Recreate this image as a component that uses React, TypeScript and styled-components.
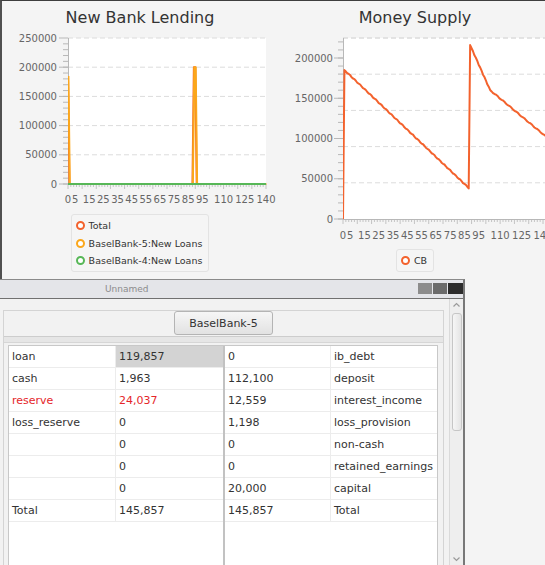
import React from "react";
import styled, { createGlobalStyle } from "styled-components";

const GlobalStyle = createGlobalStyle`
  html, body { margin: 0; padding: 0; background: #f4f4f4; }
  body { font-family: "DejaVu Sans", "Liberation Sans", sans-serif; }
`;

const FONT = "DejaVu Sans, Liberation Sans, sans-serif";

const Screen = styled.div`
  width: 545px;
  height: 565px;
  overflow: hidden;
  background: #f4f4f4;
  display: flex;
  flex-direction: column;
`;

const ChartsWindow = styled.div`
  height: 279px;
  flex: none;
  box-sizing: border-box;
  border-top: 1px solid #3e3e3e;
  border-left: 2px solid #505050;
  display: flex;
`;

const ChartPanel = styled.div<{ $width?: number; $padLeft?: number }>`
  width: ${(p) => (p.$width ? `${p.$width}px` : "auto")};
  flex: ${(p) => (p.$width ? "none" : "1")};
  padding-left: ${(p) => p.$padLeft ?? 0}px;
  min-width: 0;
  display: flex;
  flex-direction: column;
  align-items: center;
`;

const ChartTitle = styled.div`
  padding-top: 5px;
  height: 24px;
  line-height: 24px;
  font-size: 16px;
  color: #333;
  white-space: nowrap;
`;

const ChartSvg = styled.svg`
  display: block;
  flex: none;
  overflow: hidden;
`;

const Legend = styled.div`
  margin-top: 3px;
  box-sizing: border-box;
  border: 1px solid #e3e3e3;
  border-radius: 3px;
  background: #f5f5f5;
  padding: 1.75px 6px 1.75px 4px;
  display: flex;
  flex-direction: column;
`;

const LegendItem = styled.div`
  height: 17.5px;
  display: flex;
  align-items: center;
  gap: 4px;
  font-size: 9.5px;
  color: #333;
  white-space: nowrap;
`;

const LegendSymbol = styled.span<{ $color: string }>`
  width: 9px;
  height: 9px;
  box-sizing: border-box;
  border-radius: 50%;
  border: 2px solid ${(p) => p.$color};
  background: #fff;
  flex: none;
`;

const Frame = styled.div`
  width: 465px;
  flex: 1;
  min-height: 0;
  box-sizing: border-box;
  border-top: 1px solid #8a8a8a;
  border-right: 2px solid #787878;
  display: flex;
  flex-direction: column;
  background: #f2f2f2;
`;

const TitleBar = styled.div`
  height: 19px;
  flex: none;
  box-sizing: border-box;
  border-bottom: 1px solid #707070;
  background: #e4e5e9;
  display: flex;
  align-items: flex-start;
  padding-left: 105px;
`;

const FrameTitle = styled.span`
  flex: 1;
  font-size: 9px;
  line-height: 18px;
  color: #8c8c8c;
`;

const WindowButtons = styled.div`
  display: flex;
  gap: 1px;
  margin-top: 3px;
`;

const WinButton = styled.div<{ $shade: string; $w: number }>`
  width: ${(p) => p.$w}px;
  height: 11px;
  background: ${(p) => p.$shade};
`;

const FrameBody = styled.div`
  flex: 1;
  min-height: 0;
  display: flex;
`;

const BankPanel = styled.div`
  margin: 11px 0 0 3px;
  width: 441px;
  box-sizing: border-box;
  border: 1px solid #d4d4d4;
  border-bottom: none;
  display: flex;
  flex-direction: column;
`;

const BankHeader = styled.div`
  height: 25px;
  flex: none;
  display: flex;
  justify-content: center;
  align-items: flex-start;
`;

const BankButton = styled.button`
  width: 99px;
  height: 24px;
  box-sizing: border-box;
  margin: 0;
  padding: 0;
  border: 1px solid #b4b4b4;
  border-radius: 3px;
  background: linear-gradient(#f6f6f6, #e2e2e2);
  font-family: ${FONT};
  font-size: 11px;
  color: #333;
`;

const Divider = styled.div`
  height: 5px;
  flex: none;
  border-top: 1px solid #cdcdcd;
  border-bottom: 1px solid #d6d6d6;
  background: #e6e6e6;
`;

const SheetBox = styled.div`
  margin: 2px 5px 0 4px;
  flex: 1;
  display: flex;
  background: #fff;
  border: 1px solid #c8c8c8;
  border-bottom: none;
`;

const SheetHalf = styled.div<{ $cols: string }>`
  display: grid;
  grid-template-columns: ${(p) => p.$cols};
  grid-auto-rows: 22px;
  align-content: start;
`;

const SheetSeparator = styled.div`
  width: 2px;
  flex: none;
  background: #c2c2c2;
`;

const Cell = styled.div<{ $red?: boolean; $selected?: boolean; $last?: boolean }>`
  box-sizing: border-box;
  border-bottom: 1px solid #ececec;
  border-right: ${(p) => (p.$last ? "none" : "1px solid #ececec")};
  padding-left: 3px;
  font-size: 11px;
  line-height: 21px;
  white-space: nowrap;
  overflow: hidden;
  color: ${(p) => (p.$red ? "#e5262a" : "#333")};
  background: ${(p) => (p.$selected ? "#d3d3d3" : "transparent")};
`;

const ScrollBar = styled.div`
  margin-left: 5px;
  width: 14px;
  flex: none;
  box-sizing: border-box;
  border-left: 1px solid #dadada;
  background: #eeeeee;
  display: flex;
  flex-direction: column;
  align-items: center;
`;

const ScrollArrow = styled.svg`
  display: block;
  flex: none;
`;

const ScrollThumb = styled.div`
  margin-top: 2px;
  width: 10px;
  height: 118px;
  box-sizing: border-box;
  border: 1px solid #c6c6c6;
  border-radius: 3px;
  background: linear-gradient(to right, #f6f6f6, #e4e4e4);
`;

const ScrollSpacer = styled.div`
  flex: 1;
`;

/* ---------------- charts ---------------- */

const AXIS = "#b8b8b8";
const GRID = "#dcdcdc";
const LABEL = "#666";

const C1 = "#f3622d";
const C2 = "#fba71b";
const C3 = "#57b757";

const xLabels = [0, 5, 15, 25, 35, 45, 55, 65, 75, 85, 95, 110, 125, 140];

function poly(pts: [number, number][]) {
  return pts.map((p) => `${p[0].toFixed(2)},${p[1].toFixed(2)}`).join(" ");
}

const OFF = 5;

function LendingChart() {
  const W = 276, H = 181;
  const x0 = 66, x1 = 264, y0 = 3 + OFF, y1 = 149 + OFF;
  const sx = (t: number) => x0 + (t * (x1 - x0)) / 140;
  const sy = (v: number) => y1 - (v * (y1 - y0)) / 250000;
  const majors = [0, 1, 2, 3, 4, 5].map((k) => sy(k * 50000));
  const minors: number[] = [];
  for (let k = 0; k < 25; k++) minors.push(sy(k * 10000));
  const xMinor: number[] = [];
  for (let t = 0; t <= 140; t += 2) xMinor.push(t);

  const spikes: [number, number][] = [
    [0, 185000], [1, 0], [88, 0], [89, 200000], [90, 200000], [91, 0], [140, 0],
  ];
  const flat: [number, number][] = [[0, 0], [140, 0]];

  return (
    <ChartSvg width={W} height={H} viewBox={`0 0 ${W} ${H}`}>
      <defs>
        <clipPath id="lendClip">
          <rect x={x0} y={y0 - 1} width={x1 - x0 + 1} height={y1 - y0 + 2} />
        </clipPath>
      </defs>
      <rect x={x0} y={y0} width={x1 - x0} height={y1 - y0} fill="#fff" />
      {majors.slice(1).map((y, i) => (
        <line key={i} x1={x0} x2={x1} y1={y} y2={y} stroke={GRID} strokeDasharray="5 3" />
      ))}
      <line x1={x0 + 0.5} x2={x0 + 0.5} y1={y0} y2={y1} stroke={AXIS} />
      {minors.map((y, i) => (
        <line key={i} x1={x0 - 5} x2={x0} y1={y} y2={y} stroke={AXIS} />
      ))}
      {majors.map((y, i) => (
        <line key={i} x1={x0 - 9} x2={x0} y1={y} y2={y} stroke={AXIS} />
      ))}
      {majors.map((y, i) => (
        <text key={i} x={55} y={y + 3.6} textAnchor="end" fontSize={10} fill={LABEL} fontFamily={FONT}>
          {i * 50000}
        </text>
      ))}
      <line x1={x0} x2={x1} y1={y1 + 0.5} y2={y1 + 0.5} stroke={AXIS} />
      {xMinor.map((t) => (
        <line key={t} x1={sx(t)} x2={sx(t)} y1={y1} y2={y1 + (t % 10 === 0 ? 5 : 3)} stroke={AXIS} strokeWidth={0.8} />
      ))}
      {xLabels.map((t) => (
        <text key={t} x={sx(t)} y={167.6 + OFF} textAnchor="middle" fontSize={10} fill={LABEL} fontFamily={FONT}>
          {t}
        </text>
      ))}
      <g clipPath="url(#lendClip)" fill="none" strokeWidth={2} strokeLinejoin="round">
        <polyline points={poly(spikes.map(([t, v]) => [sx(t), sy(v)]))} stroke={C1} />
        <polyline points={poly(spikes.map(([t, v]) => [sx(t) + 0.4, sy(v)]))} stroke={C2} />
        <polyline points={poly(flat.map(([t, v]) => [sx(t), sy(v)]))} stroke={C3} />
      </g>
    </ChartSvg>
  );
}

function MoneyChart() {
  const W = 260, H = 216;
  const x0 = 58, x1 = 260, y0 = 3 + OFF, y1 = 184 + OFF;
  const sx = (t: number) => x0 + t * (200 / 140);
  const sy = (v: number) => y1 - (v * 161) / 200000;
  const majors = [0, 1, 2, 3, 4].map((k) => sy(k * 50000));
  const minors: number[] = [];
  for (let k = 0; sy(k * 10000) >= y0; k++) minors.push(sy(k * 10000));
  const grid = [1, 2, 3, 4, 5].map((k) => y1 - k * 36.2);
  const xMinor: number[] = [];
  for (let t = 0; t <= 142; t += 2) xMinor.push(t);

  const pts: [number, number][] = [[0, 0], [1, 185000]];
  for (let t = 2; t <= 88; t++) {
    const base = 185000 + ((38500 - 185000) * (t - 1)) / 87;
    pts.push([t, base + Math.sin(t * 1.7) * 600]);
  }
  pts.push([89, 216000]);
  for (let t = 90; t <= 103; t++) {
    const base = 216000 + ((160000 - 216000) * (t - 89)) / 14;
    pts.push([t, base + Math.sin(t * 2.1) * 700]);
  }
  for (let t = 104; t <= 143; t++) {
    const base = 160000 + ((101000 - 160000) * (t - 103)) / 40;
    pts.push([t, base + Math.sin(t * 1.3) * 600]);
  }

  return (
    <ChartSvg width={W} height={H} viewBox={`0 0 ${W} ${H}`}>
      <defs>
        <clipPath id="moneyClip">
          <rect x={x0} y={y0 - 1} width={x1 - x0 + 2} height={y1 - y0 + 2} />
        </clipPath>
      </defs>
      <rect x={x0} y={y0} width={x1 - x0} height={y1 - y0} fill="#fff" />
      <line x1={x0} x2={x1} y1={y0} y2={y0} stroke={GRID} strokeDasharray="5 3" />
      {grid.map((y, i) => (
        <line key={i} x1={x0} x2={x1} y1={y} y2={y} stroke={GRID} strokeDasharray="5 3" />
      ))}
      <line x1={x0 + 0.5} x2={x0 + 0.5} y1={y0} y2={y1} stroke={AXIS} />
      {minors.map((y, i) => (
        <line key={i} x1={x0 - 5} x2={x0} y1={y} y2={y} stroke={AXIS} />
      ))}
      {majors.map((y, i) => (
        <line key={i} x1={x0 - 9} x2={x0} y1={y} y2={y} stroke={AXIS} />
      ))}
      {majors.map((y, i) => (
        <text key={i} x={48} y={y + 3.6} textAnchor="end" fontSize={10} fill={LABEL} fontFamily={FONT}>
          {i * 50000}
        </text>
      ))}
      <line x1={x0} x2={x1} y1={y1 + 0.5} y2={y1 + 0.5} stroke={AXIS} />
      {xMinor.map((t) => (
        <line key={t} x1={sx(t)} x2={sx(t)} y1={y1} y2={y1 + (t % 10 === 0 ? 5 : 3)} stroke={AXIS} strokeWidth={0.8} />
      ))}
      {xLabels.map((t) => (
        <text key={t} x={sx(t)} y={203.6 + OFF} textAnchor="middle" fontSize={10} fill={LABEL} fontFamily={FONT}>
          {t}
        </text>
      ))}
      <g clipPath="url(#moneyClip)">
        <polyline
          points={poly(pts.map(([t, v]) => [sx(t), sy(v)]))}
          fill="none"
          stroke={C1}
          strokeWidth={2}
          strokeLinejoin="round"
        />
      </g>
    </ChartSvg>
  );
}

/* ---------------- data ---------------- */

type Row = { a: string; b: string; red?: boolean; selected?: boolean };

const assets: Row[] = [
  { a: "loan", b: "119,857", selected: true },
  { a: "cash", b: "1,963" },
  { a: "reserve", b: "24,037", red: true },
  { a: "loss_reserve", b: "0" },
  { a: "", b: "0" },
  { a: "", b: "0" },
  { a: "", b: "0" },
  { a: "Total", b: "145,857" },
];

const liabilities: Row[] = [
  { a: "0", b: "ib_debt" },
  { a: "112,100", b: "deposit" },
  { a: "12,559", b: "interest_income" },
  { a: "1,198", b: "loss_provision" },
  { a: "0", b: "non-cash" },
  { a: "0", b: "retained_earnings" },
  { a: "20,000", b: "capital" },
  { a: "145,857", b: "Total" },
];

function Chevron({ up }: { up: boolean }) {
  return (
    <ScrollArrow width={13} height={12} viewBox="0 0 13 12">
      <polyline
        points={up ? "3.5,7.5 6.5,4.5 9.5,7.5" : "3.5,4.5 6.5,7.5 9.5,4.5"}
        fill="none"
        stroke="#9a9a9a"
        strokeWidth={1.2}
      />
    </ScrollArrow>
  );
}

export default function App() {
  return (
    <>
      <GlobalStyle />
      <Screen>
        <ChartsWindow>
          <ChartPanel $width={276}>
            <ChartTitle>New Bank Lending</ChartTitle>
            <LendingChart />
            <Legend>
              <LegendItem>
                <LegendSymbol $color={C1} />
                Total
              </LegendItem>
              <LegendItem>
                <LegendSymbol $color={C2} />
                BaselBank-5:New Loans
              </LegendItem>
              <LegendItem>
                <LegendSymbol $color={C3} />
                BaselBank-4:New Loans
              </LegendItem>
            </Legend>
          </ChartPanel>
          <ChartPanel $padLeft={7}>
            <ChartTitle>Money Supply</ChartTitle>
            <MoneyChart />
            <Legend>
              <LegendItem>
                <LegendSymbol $color={C1} />
                CB
              </LegendItem>
            </Legend>
          </ChartPanel>
        </ChartsWindow>
        <Frame>
          <TitleBar>
            <FrameTitle>Unnamed</FrameTitle>
            <WindowButtons>
              <WinButton $shade="#8c8c8c" $w={14} />
              <WinButton $shade="#6b6b6b" $w={14} />
              <WinButton $shade="#2c2c2c" $w={15} />
            </WindowButtons>
          </TitleBar>
          <FrameBody>
            <BankPanel>
              <BankHeader>
                <BankButton>BaselBank-5</BankButton>
              </BankHeader>
              <Divider />
              <SheetBox>
                <SheetHalf $cols="107px 107px">
                  {assets.map((r, i) => (
                    <React.Fragment key={i}>
                      <Cell $red={r.red}>{r.a}</Cell>
                      <Cell $red={r.red} $selected={r.selected} $last>
                        {r.b}
                      </Cell>
                    </React.Fragment>
                  ))}
                </SheetHalf>
                <SheetSeparator />
                <SheetHalf $cols="106px 106px">
                  {liabilities.map((r, i) => (
                    <React.Fragment key={i}>
                      <Cell>{r.a}</Cell>
                      <Cell $last>{r.b}</Cell>
                    </React.Fragment>
                  ))}
                </SheetHalf>
              </SheetBox>
            </BankPanel>
            <ScrollBar>
              <Chevron up />
              <ScrollThumb />
              <ScrollSpacer />
              <Chevron up={false} />
            </ScrollBar>
          </FrameBody>
        </Frame>
      </Screen>
    </>
  );
}
